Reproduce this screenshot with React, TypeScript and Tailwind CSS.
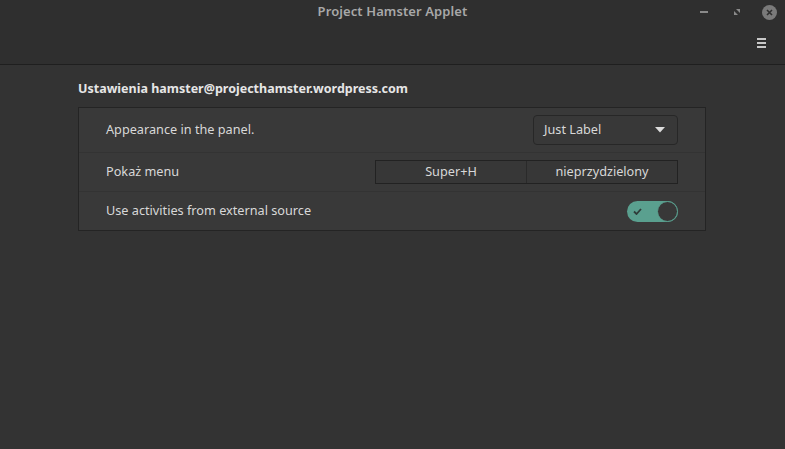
import React from "react";

export default function App() {
  return (
    <div
      className="w-[785px] h-[449px] flex flex-col bg-[#333333] text-[#dadada] overflow-hidden"
      style={{ fontFamily: '"Noto Sans", "Open Sans", sans-serif' }}
    >
      {/* header bar */}
      <div className="h-[65px] bg-[#2f2f2f] border-b border-[#1f1f1f] relative flex flex-col">
        <div className="h-[24px] flex items-center justify-center text-[13px] font-semibold text-[#a8a8a8] tracking-[0.1px]">
          Project Hamster Applet
        </div>
        <div className="absolute right-0 top-0 h-[24px] flex items-center">
          <div className="w-[8px] h-[2px] bg-[#8a8a8a] mr-[26px]" />
          <svg width="6" height="6" viewBox="0 0 6 6" className="mr-[22px]">
            <path d="M0 6 L0 2 L4 6 Z M6 0 L6 4 L2 0 Z" fill="#8a8a8a" />
          </svg>
          <div className="w-[15px] h-[15px] rounded-full bg-[#7a7a7a] flex items-center justify-center mr-[8px]">
            <svg width="7" height="7" viewBox="0 0 7 7">
              <path d="M1 1 L6 6 M6 1 L1 6" stroke="#2f2f2f" strokeWidth="1.6" />
            </svg>
          </div>
        </div>
        <div className="absolute right-[19px] top-[38px] flex flex-col gap-[2px]">
          <div className="w-[9px] h-[2px] bg-[#c8c8c8]" />
          <div className="w-[9px] h-[2px] bg-[#c8c8c8]" />
          <div className="w-[9px] h-[2px] bg-[#c8c8c8]" />
        </div>
      </div>

      {/* content */}
      <div className="pl-[78px] pr-[79px] pt-[16px]">
        <div className="text-[12.5px] font-bold text-[#e6e6e6] h-[26px] leading-[16px]">
          Ustawienia hamster@projecthamster.wordpress.com
        </div>
        <div className="border border-[#242424] bg-[#393939] text-[12.7px] text-[#d8d8d8]">
          <div className="h-[45px] flex items-center justify-between pl-[27px] pr-[27px] border-b border-[#333333]">
            <span>Appearance in the panel.</span>
            <div className="w-[145px] h-[30px] rounded-[4px] border border-[#272727] bg-[#383838] flex items-center justify-between pl-[10px] pr-[12px]">
              <span>Just Label</span>
              <svg width="10" height="6" viewBox="0 0 10 6">
                <path d="M0 0 L10 0 L5 5.5 Z" fill="#dcdcdc" />
              </svg>
            </div>
          </div>
          <div className="h-[39px] flex items-center justify-between pl-[27px] pr-[27px] border-b border-[#333333]">
            <span>Pokaż menu</span>
            <div className="w-[303px] h-[24px] flex border border-[#222222] bg-[#373737]">
              <div className="w-[151px] flex items-center justify-center border-r border-[#2a2a2a]">
                Super+H
              </div>
              <div className="flex-1 flex items-center justify-center">nieprzydzielony</div>
            </div>
          </div>
          <div className="h-[38px] flex items-center justify-between pl-[27px] pr-[27px]">
            <span>Use activities from external source</span>
            <div className="w-[51px] h-[21px] rounded-full bg-[#5aa08f] relative flex items-center">
              <svg width="9" height="7" viewBox="0 0 9 7" className="ml-[6px]">
                <path d="M1 3.5 L3.5 6 L8 1" stroke="#2f3d3a" strokeWidth="1.8" fill="none" />
              </svg>
              <div className="absolute right-0 top-0 w-[21px] h-[21px] rounded-full bg-[#383838] border border-[#5aa08f]" />
            </div>
          </div>
        </div>
      </div>
    </div>
  );
}
